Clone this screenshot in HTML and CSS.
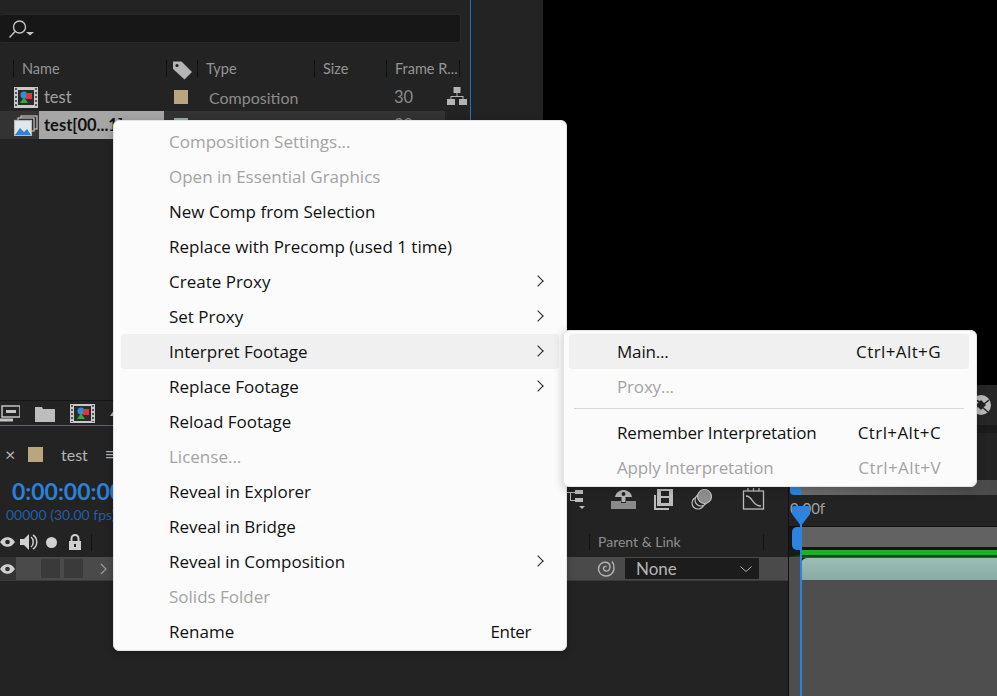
FILE: index.html
```html
<!DOCTYPE html>
<html lang="en">
<head>
<meta charset="UTF-8">
<meta name="viewport" content="width=device-width, initial-scale=1.0">
<title>After Effects context menu</title>
<link rel="stylesheet" href="styles.css">
</head>
<body>

<div class="app">
    <div class="top">
        <!-- project panel -->
        <section class="project">
            <div class="search">
                <svg width="26" height="20" viewBox="0 0 26 20" fill="none" stroke="#c4c4c4" stroke-width="1.4">
                    <circle cx="10.500" cy="8" r="6"/>
                    <path d="M6 12.500.5 18.500"/>
                    <path d="M17 13h8l-4 3.500z" fill="#c4c4c4" stroke="none"/>
                </svg>
            </div>
            <div class="cols">
                <span class="col col-name">Name</span>
                <span class="col col-tag">
                    <svg width="21" height="20" viewBox="0 0 21 20"><path d="M1 1.500h8.500L20 12l-7.500 7.500L1 9z" fill="#b5b5b5"/><circle cx="5" cy="5.500" r="1.600" fill="#232323"/></svg>
                </span>
                <span class="col col-type">Type</span>
                <span class="col col-size">Size</span>
                <span class="col col-rate">Frame R...</span>
            </div>
            <div class="row">
                <span class="cell-icon">
                    <svg width="24" height="21" viewBox="0 0 24 21"><rect width="24" height="21" fill="#c9c9c9"/><path d="M2 1v19M22 1v19" stroke="#333" stroke-width="1.500" stroke-dasharray="2 2"/><rect x="4" y="3" width="16" height="15" fill="#2b2b2b"/><circle cx="10" cy="8" r="3.500" fill="#2f8fd8"/><rect x="12" y="6" width="6" height="6" fill="#d63a3a"/><path d="M6 16l4-6 4 6z" fill="#35a548"/></svg>
                </span>
                <span class="cell-name">test</span>
                <span class="cell-tag"><i class="swatch tan"></i></span>
                <span class="cell-type">Composition</span>
                <span class="cell-rate">30</span>
                <svg class="flow" width="20" height="18" viewBox="0 0 20 18" fill="#b4b4b4"><rect x="6.500" y="0" width="7" height="6"/><rect x="0" y="12" width="8" height="6"/><rect x="12" y="12" width="8" height="6"/><path d="M9.500 6h1v3h6v3h-1v-2h-11v2h-1V9h6z"/></svg>
            </div>
            <div class="row row-sel">
                <span class="cell-icon">
                    <svg width="24" height="21" viewBox="0 0 24 21" fill="none" stroke="#c4c4c4" stroke-width="1.200"><rect x="7" y="1" width="16" height="13"/><rect x="4" y="3" width="16" height="13" fill="#232323"/><rect x="0.500" y="5.500" width="17" height="15" fill="#dfe8ef" stroke="#bbb"/><path d="M1 20l5-7 4 4 3-3 4 6z" fill="#2f83d6" stroke="none"/></svg>
                </span>
                <span class="cell-name">test[00...1]</span>
                <span class="cell-tag"><i class="swatch teal"></i></span>
                <span class="cell-type"></span>
                <span class="cell-rate">30</span>
            </div>
            <div class="project-tools">
                <svg width="20" height="20" viewBox="0 0 20 20" fill="none" stroke="#c4c4c4" stroke-width="1.500"><rect x="2" y="3" width="18" height="11"/><path d="M6 8.500h10" stroke-width="3"/><path d="M0 17h13" stroke-width="3"/></svg>
                <svg width="20" height="19" viewBox="0 0 20 19" fill="#bdbdbd"><path d="M0 3h7l1 2h12v13H0z"/></svg>
                <svg width="25" height="19" viewBox="0 0 25 19"><rect width="25" height="19" fill="#c9c9c9"/><path d="M2 1v17M23 1v17" stroke="#333" stroke-width="1.500" stroke-dasharray="2 2"/><rect x="4" y="2" width="17" height="15" fill="#2b2b2b"/><circle cx="11" cy="7" r="3.500" fill="#2f8fd8"/><rect x="13" y="5" width="6" height="6" fill="#d63a3a"/><path d="M7 15l4-6 4 6z" fill="#35a548"/></svg>
                <svg width="8" height="6" viewBox="0 0 8 6" fill="#bdbdbd"><path d="M4 0l4 6H0z"/></svg>
            </div>
        </section>

        <!-- viewer -->
        <section class="viewer-wrap">
            <div class="viewer"></div>
            <div class="viewer-bar">
                <svg class="aperture" width="22" height="22" viewBox="0 0 22 22"><circle cx="11" cy="11" r="10" fill="#b9b9b9"/><path d="M11 6l5 5-5 5-5-5z" fill="#222"/><path d="M3 5l7 3M19 6l-5 4M18 18l-6-5M4 17l4-6" stroke="#222" stroke-width="1.500"/></svg>
            </div>
        </section>
    </div>

    <!-- timeline -->
    <section class="timeline">
        <div class="tl-left">
            <div class="tl-tab">
                <span class="tab-close">×</span>
                <i class="swatch tan big"></i>
                <span class="tab-name">test</span>
                <span class="tab-menu">≡</span>
            </div>
            <div class="tl-time">
                <div class="time-text">
                    <div class="timecode">0:00:00:00</div>
                    <div class="frames">00000 (30.00 fps)</div>
                </div>
                <div class="tl-tools">
                    <svg class="t-hier" width="18" height="20" viewBox="0 0 18 20" fill="#bcbcbc"><path d="M0 2h8v1H0zM3 3h1v7h4v1H3z"/><rect x="8" y="0" width="8" height="4"/><rect x="8" y="8" width="8" height="4"/><path d="M12 16h6l-3 3z"/></svg>
                    <svg class="t-shy" width="25" height="19" viewBox="0 0 25 19" fill="#b4b4b4"><path d="M4 7c1-5 5-7 8.500-7S20 2 21 7z"/><rect x="10.500" y="7" width="4" height="5"/><path d="M0 11h10v2h5v-2h10v8H0z" fill="#8a8a8a"/><circle cx="12.500" cy="4" r="2" fill="#232323"/></svg>
                    <svg class="t-film" width="21" height="21" viewBox="0 0 21 21" fill="#bcbcbc"><rect x="5" y="0" width="16" height="17"/><rect x="9" y="2" width="8" height="5" fill="#232323"/><rect x="9" y="9" width="8" height="5" fill="#232323"/><path d="M0 6h2v15h15v-2H4V6z"/></svg>
                    <svg class="t-layers" width="21" height="21" viewBox="0 0 21 21" fill="none" stroke="#bcbcbc" stroke-width="1.200"><circle cx="7" cy="14" r="6"/><circle cx="10" cy="11" r="6" fill="#232323"/><circle cx="13.500" cy="7.500" r="7" fill="#8e8e8e"/></svg>
                    <svg class="t-graph" width="23" height="22" viewBox="0 0 23 22" fill="none" stroke="#bcbcbc" stroke-width="1.300"><rect x="1.500" y="3" width="20" height="18"/><path d="M4 8c7 0 6 10 15 10"/><path d="M6 0v3M11.500 0v3M17 0v3"/></svg>
                </div>
            </div>
            <div class="tl-head">
                <div class="switches">
                    <svg width="15" height="12" viewBox="0 0 16 12"><path d="M0 6c3-4 5-5 8-5s5 1 8 5c-3 4-5 5-8 5S3 10 0 6z" fill="#d0d0d0"/><circle cx="8" cy="6" r="2.500" fill="#232323"/></svg>
                    <svg class="sw-audio" width="18" height="16" viewBox="0 0 18 16" fill="#d0d0d0"><path d="M0 5h4l5-5v16l-5-5H0z"/><path d="M11 3c3 2 3 8 0 10M13 1c5 3 5 11 0 14" fill="none" stroke="#d0d0d0" stroke-width="1.500"/></svg>
                    <i class="solo-dot"></i>
                    <svg class="sw-lock" width="14" height="16" viewBox="0 0 14 16" fill="#d0d0d0"><path d="M1 7h12v9H1z"/><path d="M3.500 7V4.500a3.500 3.500 0 0 1 7 0V7" fill="none" stroke="#d0d0d0" stroke-width="2"/><rect x="6" y="10" width="2" height="3" fill="#232323"/></svg>
                    <i class="sw-line"></i>
                </div>
                <span class="parent-label">Parent &amp; Link</span>
            </div>
            <div class="layer">
                <span class="layer-eye">
                    <svg width="15" height="12" viewBox="0 0 16 12"><path d="M0 6c3-4 5-5 8-5s5 1 8 5c-3 4-5 5-8 5S3 10 0 6z" fill="#d0d0d0"/><circle cx="8" cy="6" r="2.500" fill="#333"/></svg>
                </span>
                <span class="layer-box first"></span>
                <span class="layer-box"></span>
                <svg class="layer-chev" width="7" height="12" viewBox="0 0 7 12" fill="none" stroke="#9a9a9a" stroke-width="1.200"><path d="M1 1l5 5-5 5"/></svg>
                <svg class="spiral" width="19" height="19" viewBox="0 0 19 19" fill="none" stroke="#b5b5b5" stroke-width="1.400"><path d="M15 2.500C18 6 18 13 13 16 8 18.500 2 16 1.500 10 1.500 5 6 2.500 10 3.500c3 1 4 5 2 7.500-2 2-5 1-5.500-1-.5-2 1.500-3 3-2.500"/></svg>
                <span class="parent-select">None
                    <svg width="12" height="6" viewBox="0 0 12 6" fill="none" stroke="#b5b5b5"><path d="M.5.500 6 5.500 11.500.500"/></svg>
                </span>
            </div>
        </div>

        <div class="tl-right">
            <div class="work-bar"><span class="work-fill"></span></div>
            <div class="ruler">0:00f</div>
            <div class="bar-row"><i class="handle-side"></i><span class="bar-fill"></span></div>
            <div class="green-line"></div>
            <div class="clip-row"><span class="clip"></span></div>
            <div class="track-rest"></div>
            <svg class="playhead-top" width="20" height="20" viewBox="0 0 20 20"><path d="M1 2a2 2 0 0 1 2-2h14a2 2 0 0 1 2 2v6l-9 12-9-12z" fill="#2d84e0"/></svg>
            <div class="playhead"></div>
        </div>
    </section>
</div>

<!-- context menu -->
<ul class="menu menu-main">
    <li class="off">Composition Settings...</li>
    <li class="off">Open in Essential Graphics</li>
    <li>New Comp from Selection</li>
    <li>Replace with Precomp (used 1 time)</li>
    <li class="more">Create Proxy</li>
    <li class="more">Set Proxy</li>
    <li class="more hover">Interpret Footage</li>
    <li class="more">Replace Footage</li>
    <li>Reload Footage</li>
    <li class="off">License...</li>
    <li>Reveal in Explorer</li>
    <li>Reveal in Bridge</li>
    <li class="more">Reveal in Composition</li>
    <li class="off">Solids Folder</li>
    <li>Rename<span class="key">Enter</span></li>
</ul>

<ul class="menu menu-sub">
    <li class="hover">Main...<span class="key">Ctrl+Alt+G</span></li>
    <li class="off">Proxy...</li>
    <li class="sep"></li>
    <li>Remember Interpretation<span class="key">Ctrl+Alt+C</span></li>
    <li class="off">Apply Interpretation<span class="key">Ctrl+Alt+V</span></li>
</ul>

</body>
</html>
```

FILE: styles.css
```css
body {
    margin: 0;
    width: 997px;
    height: 696px;
    overflow: hidden;
    position: relative;
    background: #232323;
    font-family: Lato, sans-serif;
    color: #a0a0a0;
}
svg {
    display: block;
    flex: none;
}
.top {
    display: flex;
    height: 433px;
}

/* project panel */
.project {
    width: 471px;
    height: 426px;
    border-right: 1px solid #2a6ec4;
    border-bottom: 1px solid #2a6ec4;
    padding-top: 14px;
    box-sizing: border-box;
    display: flex;
    flex-direction: column;
}
.search {
    width: 461px;
    height: 29px;
    background: #171717;
    border: 1px solid #292929;
    border-left: none;
    border-radius: 3px;
    box-sizing: border-box;
    display: flex;
    align-items: center;
    padding-left: 9px;
}
.cols {
    display: flex;
    align-items: center;
    height: 29px;
    margin-top: 11px;
    padding-left: 13px;
    font-size: 14.5px;
    color: #959595;
}
.col {
    height: 17px;
    line-height: 17px;
    border-left: 1px solid #111;
    box-sizing: border-box;
    padding-left: 8px;
    white-space: nowrap;
}
.col-name { width: 153px; }
.col-tag { width: 31px; padding-left: 5px; }
.col-type { width: 117px; }
.col-size { width: 72px; }
.col-rate { width: 74px; border-right: 1px solid #111; }
.row {
    display: flex;
    align-items: center;
    height: 28px;
    font-size: 16.5px;
    width: 445px;
    position: relative;
}
.row-sel {
    background: #333;
}
.cell-icon {
    width: 39px;
    padding-left: 14px;
    box-sizing: border-box;
    flex: none;
}
.cell-name {
    width: 125px;
    padding-left: 5px;
    box-sizing: border-box;
    line-height: 28px;
    white-space: nowrap;
    overflow: hidden;
}
.row-sel .cell-name {
    background: #a6a6a6;
    color: #111;
    font-weight: 700;
}
.cell-tag {
    width: 45px;
    padding-left: 10px;
    box-sizing: border-box;
}
.cell-type {
    width: 185px;
    flex: none;
    font-size: 16px;
    color: #8c8c8c;
}
.cell-rate {
    color: #8c8c8c;
}
.flow {
    position: absolute;
    left: 447px;
    top: 4px;
}
.swatch {
    display: block;
    width: 14px;
    height: 14px;
}
.tan { background: #b9a57e; }
.teal { background: #8fb5ad; }
.swatch.big {
    width: 15px;
    height: 15px;
}
.project-tools {
    display: flex;
    align-items: center;
    gap: 15px;
    margin-top: auto;
    height: 24px;
    border-top: 1px solid #151515;
}

/* viewer */
.viewer-wrap {
    flex: 1;
    padding-left: 72px;
    display: flex;
    flex-direction: column;
}
.viewer {
    height: 385px;
    background: #000;
}
.viewer-bar {
    height: 48px;
    box-sizing: border-box;
    background: #262626;
    border-bottom: 8px solid #1b1b1b;
    display: flex;
    justify-content: flex-end;
    align-items: center;
    padding-right: 5px;
}

/* timeline */
.timeline {
    display: flex;
    height: 263px;
}
.tl-left {
    width: 788px;
    flex: none;
    border-right: 1px solid #111;
    box-sizing: content-box;
}
.tl-tab {
    display: flex;
    align-items: center;
    height: 42px;
    font-size: 16px;
    color: #b5b5b5;
}
.tab-close {
    width: 28px;
    padding-left: 5px;
    box-sizing: border-box;
    font-size: 18px;
}
.tab-name {
    margin-left: 18px;
}
.tab-menu {
    margin-left: 17px;
    font-size: 18px;
}
.tl-time {
    height: 52px;
    display: flex;
}
.time-text {
    width: 567px;
    flex: none;
}
.timecode {
    color: #2d7fd8;
    font-size: 23px;
    font-weight: 700;
    padding-left: 12px;
    line-height: 28px;
    padding-top: 2px;
}
.frames {
    color: #1f5ea8;
    font-size: 14px;
    padding-left: 6px;
    line-height: 20px;
}
.tl-tools {
    display: flex;
    align-items: flex-start;
    padding-top: 13px;
}
.t-hier { margin-top: 2px; }
.t-shy { margin: 2px 0 0 26px; }
.t-film { margin: 1px 0 0 16px; }
.t-layers { margin: 1px 0 0 18px; }
.t-graph { margin-left: 30px; }
.tl-head {
    display: flex;
    align-items: center;
    height: 30px;
    font-size: 14px;
    color: #8f8f8f;
}
.switches {
    display: flex;
    align-items: center;
    width: 589px;
    height: 30px;
    flex: none;
}
.sw-audio { margin-left: 5px; }
.solo-dot {
    width: 11px;
    height: 11px;
    border-radius: 50%;
    background: #d0d0d0;
    margin-left: 8px;
}
.sw-lock { margin-left: 11px; }
.sw-line {
    width: 1px;
    height: 17px;
    background: #111;
    margin-left: 9px;
}
.parent-label {
    border-left: 1px solid #111;
    border-right: 1px solid #111;
    padding-left: 8px;
    width: 175px;
    box-sizing: border-box;
    line-height: 16px;
}
.layer {
    display: flex;
    align-items: center;
    height: 24px;
    background: #4a4a4a;
    border-bottom: 1px solid #3a3a3a;
    box-sizing: border-box;
}
.layer-eye {
    width: 16px;
    height: 23px;
    background: #333;
    display: flex;
    align-items: center;
    flex: none;
}
.layer-box {
    width: 19px;
    height: 19px;
    background: #3a3a3a;
    margin-left: 4px;
    flex: none;
}
.layer-box.first {
    margin-left: 25px;
}
.layer-chev {
    margin-left: 17px;
}
.spiral {
    margin-left: 490px;
}
.parent-select {
    display: flex;
    align-items: center;
    justify-content: space-between;
    width: 134px;
    height: 21px;
    margin-left: 9px;
    padding: 0 7px 0 11px;
    box-sizing: border-box;
    background: #1c1c1c;
    color: #b5b5b5;
    font-size: 17px;
}

.tl-right {
    flex: 1;
    position: relative;
    display: flex;
    flex-direction: column;
}
.work-bar {
    display: flex;
    flex: none;
    height: 15px;
    margin-top: 47px;
    padding-left: 1px;
}
.work-bar::before {
    content: "";
    width: 11px;
    height: 15px;
    background: #2d84e0;
    border-radius: 0 0 0 4px;
}
.work-fill {
    flex: 1;
    height: 15px;
    background: linear-gradient(to right, #6e6e6e, #494949);
}
.ruler {
    flex: none;
    height: 32px;
    line-height: 26px;
    font-size: 15px;
    color: #a0a0a0;
    padding-left: 1px;
    border-bottom: 1px solid #111;
    box-sizing: border-box;
}
.bar-row {
    display: flex;
    flex: none;
    height: 23px;
    padding-left: 3px;
    background: #151515;
}
.handle-side {
    width: 9px;
    height: 23px;
    background: #2d84e0;
    border-radius: 5px 0 0 5px;
}
.bar-fill {
    flex: 1;
    height: 20px;
    background: #626262;
}
.green-line {
    flex: none;
    height: 7px;
    border-left: 12px solid #1a1a1a;
    background: #1fae2f;
    border-bottom: 2px solid #0c4d14;
    box-sizing: border-box;
}
.clip-row {
    flex: none;
    height: 24px;
    background: linear-gradient(#111, #111) 12px 1px / 7px 5px no-repeat, #4e4e4e;
    padding-left: 12px;
    padding-top: 1px;
    box-sizing: border-box;
}
.clip {
    display: block;
    height: 22px;
    background: linear-gradient(#9cbdb6, #88aca5);
    border-radius: 6px 0 0 0;
}
.track-rest {
    flex: 1;
    background: #4e4e4e;
}
.playhead-top {
    position: absolute;
    left: 2px;
    top: 73px;
}
.playhead {
    position: absolute;
    left: 11px;
    top: 77px;
    bottom: 0;
    width: 2px;
    background: #2d84e0;
}

/* menus */
.menu {
    position: absolute;
    margin: 0;
    list-style: none;
    box-sizing: border-box;
    background: #fbfbfb;
    border: 1px solid #e4e4e4;
    border-radius: 6px;
    font-family: "Open Sans", sans-serif;
    font-size: 17px;
    color: #111;
    box-shadow: 0 2px 10px rgba(0, 0, 0, 0.22);
}
.menu li {
    display: flex;
    align-items: center;
    justify-content: space-between;
    height: 35px;
    border-radius: 4px;
    position: relative;
    padding: 0 28px 0 48px;
}
.menu li.off {
    color: #a3a3a3;
}
.menu li.hover {
    background: #f0f0f0;
}
.menu-main {
    left: 113px;
    top: 120px;
    width: 454px;
    height: 531px;
    padding: 3px 7px;
}
.menu-main .key {
    letter-spacing: -0.4px;
}
.menu-main li.more::after {
    content: "";
    position: absolute;
    right: 17px;
    top: 13px;
    width: 8px;
    height: 8px;
    border-top: 1.5px solid #222;
    border-right: 1.5px solid #222;
    box-sizing: border-box;
    transform: rotate(45deg);
}
.menu-sub {
    left: 563px;
    top: 330px;
    width: 414px;
    height: 157px;
    padding: 3px 7px 3px 5px;
    letter-spacing: -0.17px;
}
.menu-sub .key {
    letter-spacing: 0.4px;
}
.menu-sub li.sep {
    height: 1px;
    margin: 4px 5px 6px;
    padding: 0;
    border-radius: 0;
    background: #d9d9d9;
}
```
